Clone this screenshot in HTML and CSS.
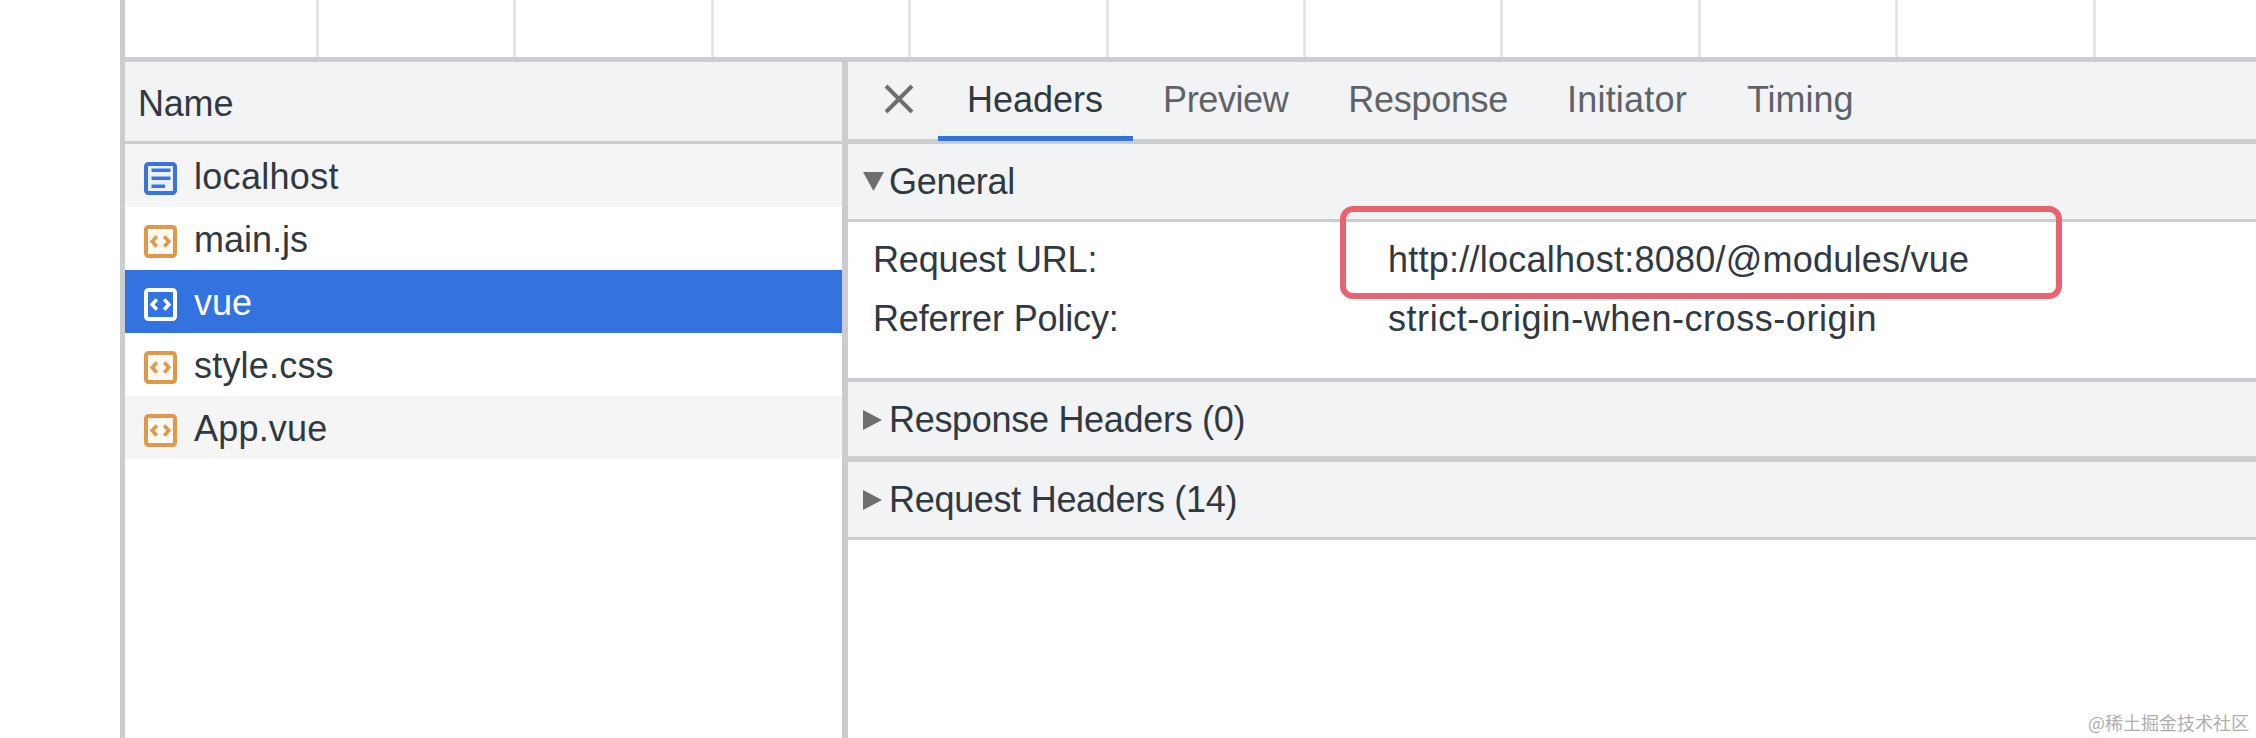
FILE: index.html
```html
<!DOCTYPE html>
<html lang="en">
<head>
<meta charset="utf-8">
<title>Network panel</title>
<link rel="stylesheet" href="styles.css">
</head>
<body>
<svg class="defs" width="0" height="0" aria-hidden="true">
  <symbol id="i-code" viewBox="0 0 33 33">
    <rect class="ic-box" x="2" y="2" width="29" height="29" rx="2.5"/>
    <path class="ic-line" d="M12.8 11.400 8.200 16.500l4.600 5.100M20.200 11.400l4.600 5.100-4.600 5.100"/>
  </symbol>
  <symbol id="i-doc" viewBox="0 0 33 33">
    <rect class="ic-box" x="2" y="2" width="29" height="29" rx="2.5"/>
    <path class="ic-line" d="M7.500 8.200h19M7.500 16.200h19M7.500 24.200h13.500"/>
  </symbol>
</svg>
<div class="app">
  <div class="shell">
    <div class="timeline">
      <i class="tick tick-first"></i><i class="tick"></i><i class="tick"></i><i class="tick"></i><i class="tick"></i><i class="tick"></i><i class="tick"></i><i class="tick"></i><i class="tick"></i><i class="tick"></i>
    </div>
    <div class="split">
      <section class="names">
        <div class="names-head"><span class="names-label">Name</span></div>
        <div class="row row-doc row-alt"><svg class="ficon"><use href="#i-doc"/></svg><span class="fname fname-wide">localhost</span></div>
        <div class="row row-code"><svg class="ficon"><use href="#i-code"/></svg><span class="fname">main.js</span></div>
        <div class="row row-selected"><svg class="ficon"><use href="#i-code"/></svg><span class="fname">vue</span></div>
        <div class="row row-code"><svg class="ficon"><use href="#i-code"/></svg><span class="fname fname-mid">style.css</span></div>
        <div class="row row-code row-alt"><svg class="ficon"><use href="#i-code"/></svg><span class="fname fname-mid">App.vue</span></div>
      </section>
      <section class="details">
        <div class="tabs">
          <svg class="close" viewBox="0 0 30 30"><path d="M2 2l26 26M28 2 2 28"/></svg>
          <div class="tab tab-active">Headers</div>
          <div class="tab tab-preview">Preview</div>
          <div class="tab tab-response">Response</div>
          <div class="tab tab-initiator">Initiator</div>
          <div class="tab">Timing</div>
        </div>
        <div class="sec-head sec-open">
          <span class="caret"><svg class="tri" width="21" height="19" viewBox="0 0 21 19"><path d="M0 0h21L10.500 19z"/></svg></span>General
        </div>
        <div class="sec-body">
          <div class="kv"><span class="k">Request URL:</span><span class="v v-url">http://localhost:8080/@modules/vue</span></div>
          <div class="kv"><span class="k">Referrer Policy:</span><span class="v v-policy">strict-origin-when-cross-origin</span></div>
          <div class="mark"></div>
        </div>
        <div class="sec-head sec-mid">
          <span class="caret"><svg class="tri" width="19" height="20" viewBox="0 0 19 20"><path d="M0 0l19 10L0 20z"/></svg></span>Response Headers (0)
        </div>
        <div class="sec-head sec-last">
          <span class="caret"><svg class="tri" width="19" height="20" viewBox="0 0 19 20"><path d="M0 0l19 10L0 20z"/></svg></span>Request Headers (14)
        </div>
      </section>
    </div>
  </div>
</div>
<div class="watermark">@稀土掘金技术社区</div>
</body>
</html>
```
FILE: styles.css
```css
* { box-sizing: border-box; }
html, body { margin: 0; padding: 0; background: #fff; }
body {
  position: relative;
  width: 2256px;
  height: 738px;
  overflow: hidden;
  font-family: "Liberation Sans", Arial, sans-serif;
  font-size: 36px;
  color: #303942;
}
.defs { position: absolute; }

.app { height: 738px; padding-left: 120px; }
.shell {
  height: 100%;
  display: flex;
  flex-direction: column;
  border-left: 5px solid #cbcdd1;
}

.timeline {
  height: 62px;
  flex: none;
  display: flex;
  border-bottom: 5px solid #cbcdd1;
}
.tick {
  width: 197.400px;
  flex: none;
  border-right: 3px solid #e4e5e7;
}
.tick-first { width: 194px; }

.split { flex: 1; display: flex; min-height: 0; }

.names { width: 717px; flex: none; }
.names-head {
  height: 82px;
  padding: 2px 0 0 13px;
  line-height: 80px;
  background: #f1f3f4;
  border-bottom: 3px solid #cbcdd1;
}
.names-label { letter-spacing: -0.2px; }
.row {
  height: 63px;
  display: flex;
  align-items: center;
  padding: 3px 0 0 19px;
  gap: 17px;
  background: #fff;
  --ic-color: #e0994a;
  --ic-fill: #fffaf3;
}
.fname { line-height: 60px; }
.fname-wide { letter-spacing: 0.3px; }
.fname-mid { letter-spacing: 0.2px; }
.row-alt { background: #f5f5f5; }
.row-doc { --ic-color: #3b74dc; --ic-fill: #eaf1fd; }
.row-selected {
  background: #3373e0;
  color: #fff;
  --ic-color: #fff;
  --ic-fill: #3373e0;
}
.ficon { width: 33px; height: 33px; flex: none; margin-top: 3px; }
.ic-box { fill: var(--ic-fill); stroke: var(--ic-color); stroke-width: 4; }
.ic-line { fill: none; stroke: var(--ic-color); stroke-width: 3.600; }

.details {
  flex: 1;
  min-width: 0;
  border-left: 6px solid #cbcdd1;
  position: relative;
}
.tabs {
  height: 82px;
  display: flex;
  align-items: flex-start;
  background: #f1f3f4;
  border-bottom: 5px solid #cbcdd1;
  padding-left: 36px;
}
.close {
  width: 30px;
  height: 30px;
  margin: 22px 24px 0 0;
  flex: none;
  fill: none;
  stroke: #6e6e6e;
  stroke-width: 4;
}
.tab {
  height: 79px;
  padding: 0 30px;
  line-height: 76px;
  color: #5f6368;
  flex: none;
}
.tab-active {
  padding: 0 30px 0 29px;
  color: #303942;
  border-bottom: 5px solid #3574dc;
}
.tab-preview { letter-spacing: -0.4px; }
.tab-response { letter-spacing: -0.3px; }
.tab-initiator { letter-spacing: 0.2px; margin-left: -1px; }

.sec-head {
  display: flex;
  align-items: center;
  padding-left: 15px;
  background: #f1f3f4;
  line-height: 36px;
  letter-spacing: -0.3px;
  border-bottom: 3px solid #cbcdd1;
}
.sec-open { height: 78px; }
.sec-mid { height: 84px; padding-top: 2px; border-top: 4px solid #cbcdd1; border-bottom-width: 6px; }
.sec-last { height: 78px; }
.caret {
  width: 26px;
  flex: none;
  display: flex;
  align-items: center;
}
.tri { fill: #6e6e6e; }

.sec-body { height: 156px; padding: 8px 0 0 25px; position: relative; }
.kv { display: flex; height: 59px; line-height: 59px; }
.k { width: 515px; flex: none; letter-spacing: -0.15px; }
.v-url { letter-spacing: 0.25px; }
.v-policy { letter-spacing: 0.55px; }

.mark {
  position: absolute;
  left: 492px;
  top: -16px;
  width: 722px;
  height: 93px;
  border: 6px solid #e9636e;
  border-radius: 13px;
}

.watermark {
  position: absolute;
  right: 7px;
  bottom: 6px;
  font-family: "Noto Sans CJK SC", sans-serif;
  font-size: 18px;
  line-height: 20px;
  color: #aeaeae;
}
```
